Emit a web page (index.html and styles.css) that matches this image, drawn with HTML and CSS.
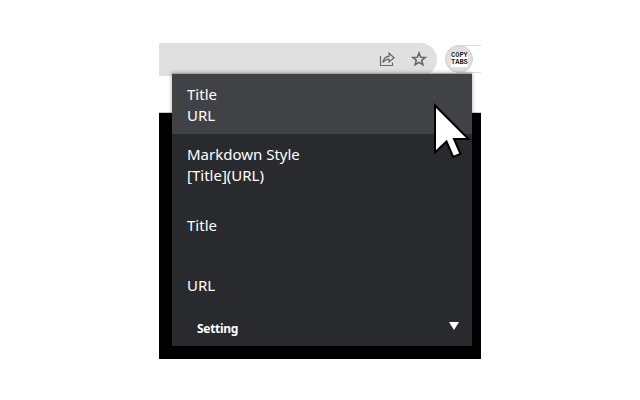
FILE: index.html
```html
<!DOCTYPE html>
<html lang="en">
<head>
<meta charset="utf-8">
<title>Copy Tabs</title>
<link rel="stylesheet" href="styles.css">
</head>
<body>
<main class="browser">
  <header class="toolbar">
    <div class="address">
      <svg class="share" width="16" height="16" viewBox="0 0 16 16"><path d="M1.500 5v9.500h12v-3M4 11.500C4.500 7.500 6.500 5.500 10 5.300V2.200L15 6.800 10 11V8.200C7.200 8.200 5.500 9.300 4 11.500Z"/></svg>
      <svg class="star" width="16" height="16" viewBox="0 0 16 16"><path d="M8 2 9.700 6.200 14.200 6.500 10.700 9.400 11.900 13.800 8 11.400 4.100 13.800 5.300 9.400 1.800 6.500 6.300 6.200Z"/></svg>
    </div>
    <div class="extension"><div class="logo"><span>COPY</span><span>TABS</span></div></div>
  </header>
  <div class="page"></div>
  <nav class="popup">
    <div class="item double active"><span>Title</span><span>URL</span></div>
    <div class="item double"><span>Markdown Style</span><span>[Title](URL)</span></div>
    <div class="item"><span>Title</span></div>
    <div class="item"><span>URL</span></div>
    <div class="setting"><span>Setting</span><i class="arrow"></i></div>
  </nav>
  <svg class="cursor" width="40" height="60" viewBox="0 0 40 60"><path d="M4 5.500V52.500L15.500 41.500 22.200 57 29.500 53.800 23 39H37.500Z"/></svg>
</main>
</body>
</html>
```
FILE: styles.css
```css
body {
  margin: 0;
  padding: 43px 159px 41px;
  background: #fff;
  font-family: "Noto Sans", sans-serif;
}
.browser {
  position: relative;
  width: 322px;
  height: 316px;
  overflow: hidden;
}
.toolbar {
  display: flex;
  height: 33px;
}
.address {
  display: flex;
  box-sizing: border-box;
  width: 278px;
  height: 33px;
  padding: 8px 10px 0 0;
  justify-content: flex-end;
  gap: 16px;
  border-radius: 0 17px 17px 0;
  background: #e0e0e0;
}
.address svg {
  fill: none;
  stroke: #666;
  stroke-width: 1.2;
}
.address .star {
  stroke-width: 1.6;
}
.extension {
  display: flex;
  box-sizing: border-box;
  width: 36px;
  height: 28px;
  margin: 2px 0 0 8px;
  background: linear-gradient(#ddd, #ddd) 14px 0 / 22px 1px no-repeat, linear-gradient(#ddd, #ddd) 14px 27px / 22px 1px no-repeat;
}
.logo {
  display: flex;
  flex-direction: column;
  box-sizing: border-box;
  width: 28px;
  height: 28px;
  padding: 6px 0 0 5px;
  border: 1px solid #cfcfcf;
  border-radius: 50%;
  background: linear-gradient(#fff, #fff) 5px 6px / 17px 15px no-repeat, #e0e0e0;
  color: #222;
  font: bold 7px/7px "Liberation Mono", monospace;
}
.page {
  height: 246px;
  margin-top: 36px;
  border-top: 1px solid #ccc;
  background: #000;
}
.popup {
  position: absolute;
  top: 30px;
  left: 13px;
  width: 300px;
  height: 272px;
  border-top: 1px solid #a4a5a7;
  background: #292a2d;
  color: #fff;
  box-shadow: 0 0 4px rgba(0, 0, 0, .35);
}
.item {
  display: flex;
  flex-direction: column;
  justify-content: center;
  box-sizing: border-box;
  height: 60px;
  padding: 3px 0 0 15px;
  font-size: 15px;
  line-height: 21px;
}
.double {
  padding-top: 1px;
}
.active {
  background: #414245;
}
.setting {
  display: flex;
  justify-content: space-between;
  align-items: flex-start;
  padding: 6px 13px 0 25px;
  font-size: 12px;
  font-weight: bold;
  letter-spacing: -.3px;
  line-height: 17px;
}
.arrow {
  width: 10px;
  height: 8px;
  margin-top: 2px;
  background: #fff;
  clip-path: polygon(0 0, 100% 0, 50% 100%);
}
.cursor {
  position: absolute;
  top: 57px;
  left: 272px;
  fill: #fff;
  stroke: #000;
  stroke-width: 2;
}
```
